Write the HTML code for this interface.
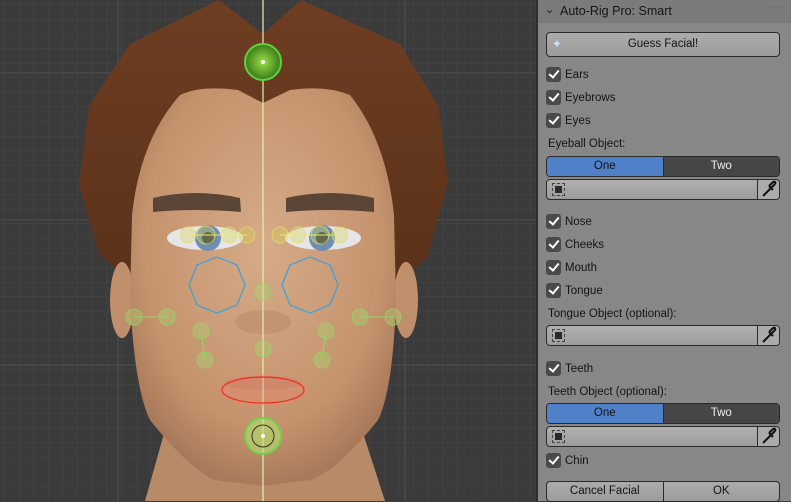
<!DOCTYPE html>
<html><head><meta charset="utf-8"><style>
*{margin:0;padding:0;box-sizing:border-box}
body{width:791px;height:501px;overflow:hidden;background:#3d3d3d;font-family:"Liberation Sans",sans-serif;position:relative}
#vp{position:absolute;left:0;top:0;width:536px;height:501px}
#panel{position:absolute;left:536px;top:0;width:255px;height:501px;background:#878787;border-left:2px solid #2e2e2e}
.hdr{position:absolute;left:0;top:0;width:253px;height:23px;background:#7b7b7b;font-size:12.5px;color:#151515}
.a{position:absolute;font-size:11.5px;color:#141414;white-space:nowrap;margin-top:2px}
.cb{position:absolute;left:8px;width:15px;height:15px;background:#4a4a4a;border-radius:3px}
.cb:after{content:"";position:absolute;left:5px;top:1px;width:4px;height:8px;border:solid #fff;border-width:0 2px 2px 0;transform:rotate(40deg)}
.btn{position:absolute;left:8px;width:234px;border:1px solid #2a2a2a;border-radius:4px;background:linear-gradient(#ababab,#9c9c9c);font-size:11.5px;color:#111;text-align:center}
.seg{position:absolute;left:8px;width:234px;height:21px;border:1px solid #2a2a2a;border-radius:4px;overflow:hidden;display:flex;font-size:11.5px}
.seg div{flex:1;text-align:center;line-height:19px}
.seg .on{background:#5080c8;color:#111;border-right:1px solid #2a2a2a}
.seg .off{background:#464646;color:#eee}
.fld{position:absolute;left:8px;width:234px;height:21px;border:1px solid #2a2a2a;border-radius:4px;background:linear-gradient(#b0b0b0,#9c9c9c);overflow:hidden}
.fld .sq{position:absolute;left:5px;top:3px;width:13px;height:13px;border:1px dashed #444}
.fld .sq:after{content:"";position:absolute;left:2px;top:2px;width:7px;height:7px;background:#2a2a2a}
.fld .pk{position:absolute;right:0;top:0;width:22px;height:19px;border-left:1px solid #2a2a2a;background:#ababab}
</style></head><body>
<svg id="vp" width="536" height="501" viewBox="0 0 536 501">
<defs>
<pattern id="g" width="14.6" height="14.6" patternUnits="userSpaceOnUse" x="5" y="5"><path d="M14.6 0V14.6H0" fill="none" stroke="#474747" stroke-width="1"/></pattern>
<radialGradient id="sk" cx="0.5" cy="0.4" r="0.6"><stop offset="0" stop-color="#d6ab88"/><stop offset="0.75" stop-color="#c4936d"/><stop offset="1" stop-color="#a97a5a"/></radialGradient>
<linearGradient id="hr" x1="0" y1="0" x2="0" y2="1"><stop offset="0" stop-color="#6e3e22"/><stop offset="1" stop-color="#5a311a"/></linearGradient>
<radialGradient id="gm" cx="0.5" cy="0.5" r="0.5"><stop offset="0" stop-color="#9be04a"/><stop offset="1" stop-color="#3a7a18"/></radialGradient>
</defs>
<rect width="536" height="501" fill="#3b3b3b"/>
<rect width="536" height="501" fill="url(#g)"/>
<path d="M0 73H536M0 220H536M0 365H536M405 0V501M118 0V501" stroke="#525252"/>
<path d="M165 430 L145 501 L385 501 L362 430 Z" fill="#b88b68"/>
<path d="M219 0 L263 34 L301 0 L400 44 L438 106 L448 181 L427 258 L392 286 L380 250 L150 250 L133 286 L99 253 L79 185 L89 106 L130 44 Z" fill="url(#hr)"/>
<ellipse cx="122" cy="300" rx="12" ry="38" fill="#c0906c"/>
<ellipse cx="406" cy="300" rx="12" ry="38" fill="#c0906c"/>
<path d="M263 103 L238 90 Q200 85 180 95 Q140 140 132 215 L130 300 Q135 390 150 420 Q190 470 215 480 L263 486 L311 480 Q338 470 378 420 Q393 390 396 300 L394 215 Q386 140 350 95 Q326 85 290 90 Z" fill="url(#sk)"/>
<ellipse cx="263" cy="322" rx="28" ry="12" fill="#b78764" opacity=".5"/>
<ellipse cx="263" cy="383" rx="38" ry="7" fill="#b07d5e" opacity=".45"/>
<path d="M153 198 Q195 188 240 198 L241 212 Q195 208 153 212 Z" fill="#5b4536"/>
<path d="M286 198 Q330 188 374 198 L374 212 Q330 208 286 212 Z" fill="#5b4536"/>
<ellipse cx="205" cy="238" rx="38" ry="12" fill="#e6e6e8"/>
<ellipse cx="323" cy="238" rx="38" ry="12" fill="#e6e6e8"/>
<circle cx="208" cy="238" r="13" fill="#6f8fb0"/><circle cx="208" cy="238" r="6" fill="#2a3040"/>
<circle cx="322" cy="238" r="13" fill="#6f8fb0"/><circle cx="322" cy="238" r="6" fill="#2a3040"/>
<line x1="263" y1="0" x2="263" y2="501" stroke="#e6f0b0" stroke-width="1.2"/>
<g fill="#d7d455" fill-opacity=".35" stroke="#e4e060" stroke-opacity=".7">
<circle cx="188" cy="235" r="8"/><circle cx="206" cy="235" r="9"/><circle cx="229" cy="235" r="8"/><circle cx="247" cy="235" r="8"/>
<circle cx="280" cy="235" r="8"/><circle cx="298" cy="235" r="8"/><circle cx="320" cy="235" r="9"/><circle cx="340" cy="235" r="8"/>
</g>
<path d="M188 235H247M280 235H340" stroke="#eaea70"/>
<g fill="none" stroke="#3aa0e0" stroke-width="1.2">
<polygon points="217,257 237,265 245,285 237,305 217,313 197,305 189,285 197,265"/>
<polygon points="310,257 330,265 338,285 330,305 310,313 290,305 282,285 290,265"/>
</g>
<g fill="#a6e070" fill-opacity=".3" stroke="#8fd860" stroke-opacity=".8">
<circle cx="134" cy="317" r="8"/><circle cx="167" cy="317" r="8"/><circle cx="360" cy="317" r="8"/><circle cx="393" cy="317" r="8"/>
<circle cx="201" cy="331" r="8"/><circle cx="205" cy="360" r="8"/><circle cx="326" cy="331" r="8"/><circle cx="322" cy="360" r="8"/>
<circle cx="263" cy="292" r="8"/><circle cx="263" cy="349" r="8"/>
</g>
<path d="M134 317H167M360 317H393M201 331L205 360M326 331L322 360" stroke="#8fd860"/>
<ellipse cx="263" cy="390" rx="45" ry="16" fill="#f08070" opacity=".35"/>
<ellipse cx="263" cy="390" rx="41" ry="13" fill="none" stroke="#e83020" stroke-width="1.2"/>
<circle cx="263" cy="436" r="18" fill="#b4e070" fill-opacity=".6" stroke="#70d050" stroke-width="2"/>
<circle cx="263" cy="436" r="11" fill="none" stroke="#2a3a20"/>
<circle cx="263" cy="62" r="18" fill="url(#gm)" stroke="#60d040" stroke-width="2"/>
<circle cx="263" cy="62" r="2" fill="#fff"/><circle cx="263" cy="436" r="2" fill="#fff"/>
</svg>
<div id="panel">
<div class="hdr"><span style="position:absolute;left:7px;top:3px;font-size:11px">&#8964;</span><span style="position:absolute;left:22px;top:4px">Auto-Rig Pro: Smart</span><span style="position:absolute;right:10px;top:4px;color:#666;font-size:9px">::::</span></div>
<div class="btn" style="top:32px;height:25px;line-height:23px"><span style="position:absolute;left:5px;top:0;color:#cfe0ff;font-size:12px">✦</span>Guess Facial!</div>
<div class="cb" style="top:67px"></div><div class="a" style="left:27px;top:67px">Ears</div>
<div class="cb" style="top:90px"></div><div class="a" style="left:27px;top:90px">Eyebrows</div>
<div class="cb" style="top:113px"></div><div class="a" style="left:27px;top:113px">Eyes</div>
<div class="a" style="left:10px;top:136px">Eyeball Object:</div>
<div class="seg" style="top:156px"><div class="on">One</div><div class="off">Two</div></div>
<div class="fld" style="top:179px"><div class="sq"></div><div class="pk"><svg width="22" height="19" viewBox="0 0 22 19"><path d="M5 16 L13 8 M11 6 L15 10 M13 8 L16 5 Q18 3 17 2 Q16 1 14 3 L11 6" stroke="#111" stroke-width="2" fill="none"/></svg></div></div>
<div class="cb" style="top:214px"></div><div class="a" style="left:27px;top:214px">Nose</div>
<div class="cb" style="top:237px"></div><div class="a" style="left:27px;top:237px">Cheeks</div>
<div class="cb" style="top:260px"></div><div class="a" style="left:27px;top:260px">Mouth</div>
<div class="cb" style="top:283px"></div><div class="a" style="left:27px;top:283px">Tongue</div>
<div class="a" style="left:10px;top:306px">Tongue Object (optional):</div>
<div class="fld" style="top:325px"><div class="sq"></div><div class="pk"><svg width="22" height="19" viewBox="0 0 22 19"><path d="M5 16 L13 8 M11 6 L15 10 M13 8 L16 5 Q18 3 17 2 Q16 1 14 3 L11 6" stroke="#111" stroke-width="2" fill="none"/></svg></div></div>
<div class="cb" style="top:361px"></div><div class="a" style="left:27px;top:361px">Teeth</div>
<div class="a" style="left:10px;top:384px">Teeth Object (optional):</div>
<div class="seg" style="top:403px"><div class="on">One</div><div class="off">Two</div></div>
<div class="fld" style="top:426px"><div class="sq"></div><div class="pk"><svg width="22" height="19" viewBox="0 0 22 19"><path d="M5 16 L13 8 M11 6 L15 10 M13 8 L16 5 Q18 3 17 2 Q16 1 14 3 L11 6" stroke="#111" stroke-width="2" fill="none"/></svg></div></div>
<div class="cb" style="top:453px"></div><div class="a" style="left:27px;top:453px">Chin</div>
<div class="btn" style="top:481px;height:21px;line-height:19px;display:flex;padding:0"><div style="flex:1;border-right:1px solid #2a2a2a">Cancel Facial</div><div style="flex:1">OK</div></div>
</div>
</body></html>
